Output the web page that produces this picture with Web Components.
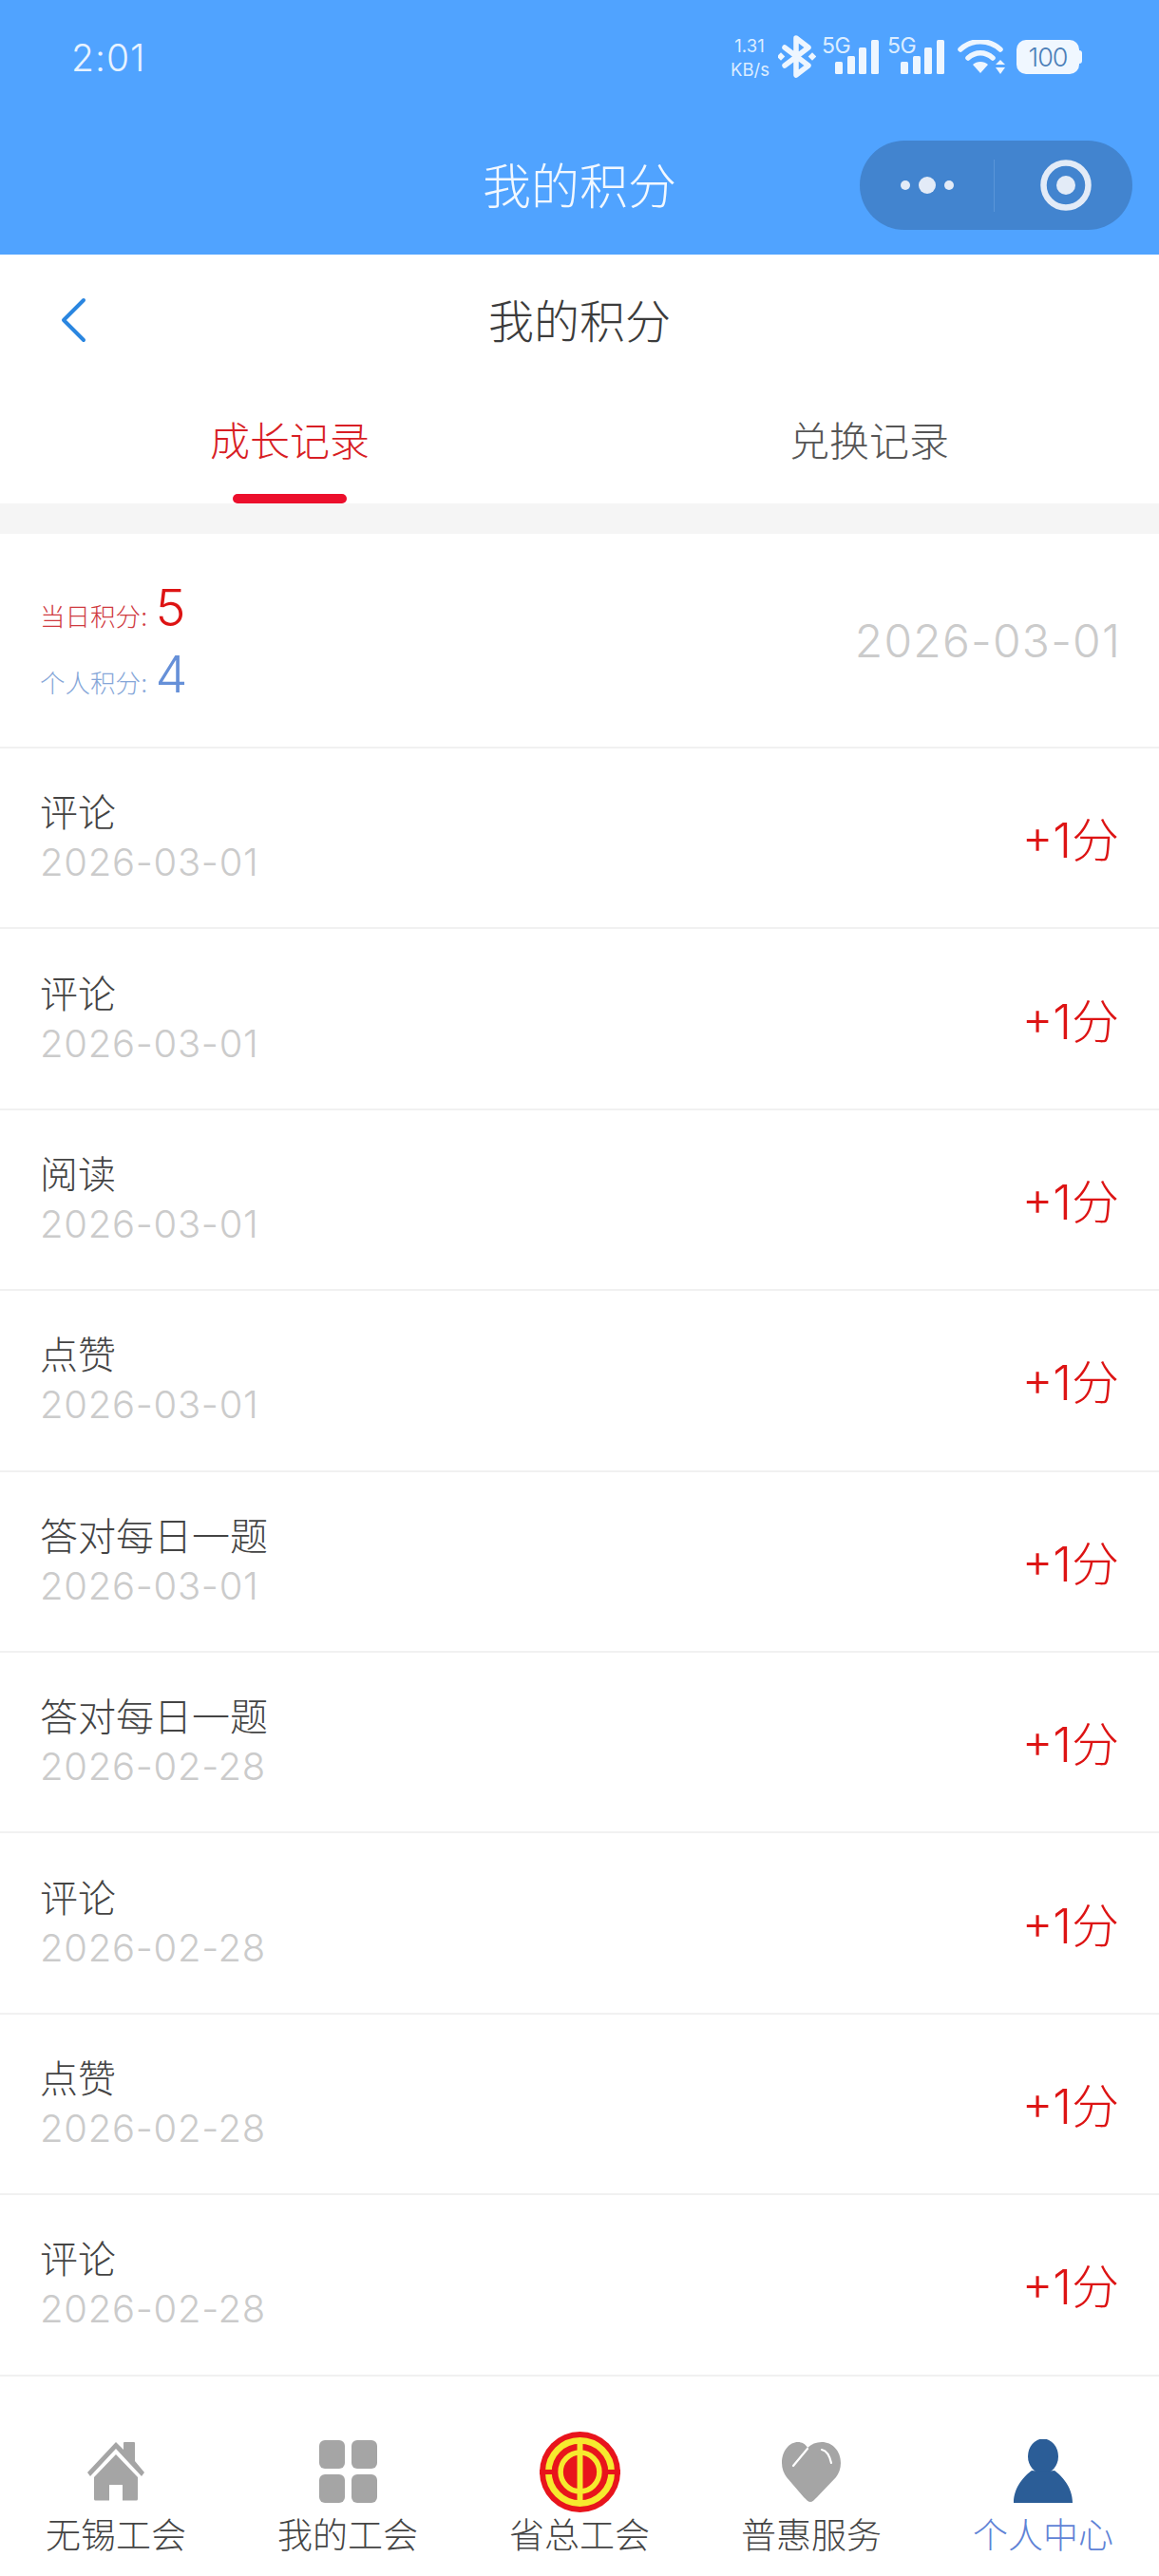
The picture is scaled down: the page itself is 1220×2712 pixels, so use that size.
<!DOCTYPE html>
<html lang="zh-CN">
<head>
<meta charset="utf-8">
<title>我的积分</title>
<style>
html, body{ margin: 0; padding: 0; background: #fff; }
body{
    width: 1220px;
    height: 2712px;
    overflow: hidden;
    font-family: Inter, "Noto Sans CJK SC", sans-serif;
    font-weight: 300;
    color: #444;
}
</style>
</head>
<body>
<status-header>
    <span slot="time">2:01</span>
    <span slot="title">我的积分</span>
</status-header>
<page-title>我的积分</page-title>
<record-tabs>
    <span slot="first">成长记录</span>
    <span slot="second">兑换记录</span>
</record-tabs>
<score-summary today="5" total="4" date="2026-03-01"></score-summary>
<score-row name="评论" date="2026-03-01"></score-row>
<score-row name="评论" date="2026-03-01"></score-row>
<score-row name="阅读" date="2026-03-01"></score-row>
<score-row name="点赞" date="2026-03-01"></score-row>
<score-row name="答对每日一题" date="2026-03-01"></score-row>
<score-row name="答对每日一题" date="2026-02-28"></score-row>
<score-row name="评论" date="2026-02-28"></score-row>
<score-row name="点赞" date="2026-02-28"></score-row>
<score-row name="评论" date="2026-02-28"></score-row>
<bottom-tabs>
    <tab-item label="无锡工会">
        <svg viewBox="0 0 62 68" width="62" height="68">
            <path fill="#a5a5a5" d="M1 35 31 3 39 11V4a1 1 0 0 1 1-1h10a1 1 0 0 1 1 1V23L61 35 58 39 31 10 4 39Z"/>
            <path fill="#a5a5a5" d="M31 16 54 40V63a1.500 1.500 0 0 1-1.500 1.500H38V48H24V64.500H9.500A1.500 1.500 0 0 1 8 63V40Z"/>
        </svg>
    </tab-item>
    <tab-item label="我的工会">
        <svg viewBox="0 0 62 68" width="62" height="68">
            <rect x="1" y="1" width="27" height="30" rx="6" fill="#a5a5a5"/>
            <rect x="35" y="1" width="27" height="30" rx="6" fill="#a5a5a5"/>
            <rect x="1" y="37" width="27" height="30" rx="6" fill="#a5a5a5"/>
            <rect x="35" y="37" width="27" height="30" rx="6" fill="#a5a5a5"/>
        </svg>
    </tab-item>
    <tab-item label="省总工会">
        <svg viewBox="0 0 100 100" width="85" height="85">
            <circle cx="50" cy="50" r="50" fill="#e8141c"/>
            <circle cx="50" cy="50" r="39" fill="none" stroke="#f6ea2e" stroke-width="8"/>
            <rect x="0" y="47" width="20" height="6" fill="#e8141c"/>
            <rect x="80" y="47" width="20" height="6" fill="#e8141c"/>
            <circle cx="50" cy="50" r="24" fill="none" stroke="#f6ea2e" stroke-width="6.500"/>
            <rect x="46.500" y="10" width="7" height="80" fill="#f6ea2e"/>
        </svg>
    </tab-item>
    <tab-item label="普惠服务">
        <svg viewBox="0 0 62 68" width="62" height="68">
            <path fill="#a5a5a5" d="M30 66C28 66 26 64 23 61L5 40C2 36 0 31 0 25 0 12 8 3 17 3 21 3 25 5 27 9 31 5 36 3 42 3 53 3 62 12 62 25 62 31 60 36 57 40L37 61C34 64 32 66 30 66Z"/>
            <path fill="none" stroke="#fff" stroke-width="2.200" stroke-linecap="round" d="M12 28 27 10"/>
            <path fill="none" stroke="#fff" stroke-width="2.200" stroke-linecap="round" d="M42 11C47 12 50 16 52 25"/>
        </svg>
    </tab-item>
    <tab-item label="个人中心" active>
        <svg viewBox="0 0 62 68" width="62" height="68">
            <ellipse cx="31" cy="18" rx="16" ry="18.500" fill="#2b5d97"/>
            <path fill="#2b5d97" d="M0 67C0 50 12 38 19 33 25 34 37 34 43 33 50 38 62 50 62 67Z"/>
        </svg>
    </tab-item>
</bottom-tabs>

<script>
// blue top area: phone status bar plus the host app title and capsule
const statusTemplate = document.createElement("template");
statusTemplate.innerHTML = `
<style>
:host{
    display: block;
    height: 268px;
    background: #50a3ff;
    color: #fff;
    font-family: Inter, "Noto Sans CJK SC", sans-serif;
}
.status{
    display: flex;
    align-items: flex-start;
    justify-content: space-between;
    height: 148px;
    padding: 0 81px 0 75px;
    box-sizing: border-box;
}
.time{
    margin-top: 38px;
    font-size: 39px;
    line-height: 46px;
    font-weight: 300;
    letter-spacing: 1px;
    color: #e8f3ff;
}
.icons{
    display: flex;
    align-items: flex-start;
    margin-top: 36px;
    color: #eef6ff;
}
.speed{
    width: 40px;
    font-size: 18.500px;
    line-height: 25px;
    text-align: center;
    font-weight: 400;
    color: #dcedff;
}
.speed span{ display: block; white-space: nowrap; }
.net{
    position: relative;
    width: 60px;
    height: 44px;
    margin-right: 9px;
}
.net span{
    position: absolute;
    left: 0;
    top: 0;
    font-size: 23px;
    line-height: 24px;
    font-weight: 400;
    letter-spacing: -.5px;
    color: #dcedff;
}
.net svg{ position: absolute; right: 0; top: 6px; }
.bt{ margin: 1px 6px 0 10px; }
.wifi{ margin: 6px 12px 0 5px; }
.battery{
    display: flex;
    align-items: center;
    justify-content: center;
    box-sizing: border-box;
    width: 66px;
    height: 36px;
    margin-top: 6px;
    border-radius: 10px;
    background: #f0f7ff;
    color: #4c7fb8;
    font-size: 27px;
    font-weight: 300;
    letter-spacing: -1px;
}
.cap{
    width: 3px;
    height: 14px;
    margin: 17px 0 0 0;
    border-radius: 0 3px 3px 0;
    background: #f0f7ff;
}
.bar{
    position: relative;
    height: 120px;
    display: flex;
    align-items: center;
    justify-content: center;
}
.title{
    font-size: 51px;
    font-weight: 300;
    color: #f2f8ff;
    margin-top: -30px;
}
.capsule{
    position: absolute;
    left: 905px;
    top: 0;
    width: 287px;
    height: 94px;
    border-radius: 47px;
    background: #4284cf;
    display: flex;
    align-items: center;
}
.capsule .more, .capsule .target{
    flex: 1;
    height: 100%;
    display: flex;
    align-items: center;
    justify-content: center;
}
.capsule .more{ gap: 9px; }
.capsule .target{ padding-left: 4px; }
.more i{
    display: block;
    width: 10px;
    height: 10px;
    border-radius: 50%;
    background: #e3ebf7;
}
.more i.big{ width: 18px; height: 18px; }
.sep{ width: 1px; height: 55px; background: #5a95d8; }
</style>
<div class="status">
    <div class="time"><slot name="time"></slot></div>
    <div class="icons">
        <div class="speed"><span>1.31</span><span>KB/s</span></div>
        <svg class="bt" width="40" height="45" viewBox="0 0 40 45">
            <path fill="none" stroke="#eef6ff" stroke-width="5.500" stroke-linejoin="round" stroke-linecap="round" d="M7 13 32 32 19 42V3L32 13 7 32"/>
            <rect x="0" y="19.500" width="6" height="6" transform="rotate(45 3 22.500)" fill="#eef6ff"/>
            <rect x="33" y="19.500" width="6" height="6" transform="rotate(45 36 22.500)" fill="#eef6ff"/>
        </svg>
        <div class="net">
            <span>5G</span>
            <svg width="46" height="36" viewBox="0 0 46 36" fill="#eef6ff">
                <rect x="0" y="23" width="8" height="13" rx="1.500"/>
                <rect x="13" y="17" width="8" height="19" rx="1.500"/>
                <rect x="25" y="8" width="8" height="28" rx="1.500"/>
                <rect x="38" y="0" width="8" height="36" rx="1.500"/>
            </svg>
        </div>
        <div class="net">
            <span>5G</span>
            <svg width="46" height="36" viewBox="0 0 46 36" fill="#eef6ff">
                <rect x="0" y="23" width="8" height="13" rx="1.500"/>
                <rect x="13" y="17" width="8" height="19" rx="1.500"/>
                <rect x="25" y="8" width="8" height="28" rx="1.500"/>
                <rect x="38" y="0" width="8" height="36" rx="1.500"/>
            </svg>
        </div>
        <svg class="wifi" width="50" height="36" viewBox="0 0 50 36" fill="none">
            <path stroke="#eef6ff" stroke-width="5.500" stroke-linecap="round" d="M3 10C15-1 33-1 45 10"/>
            <path stroke="#eef6ff" stroke-width="5.500" stroke-linecap="round" d="M11 19C19 12 29 12 37 19"/>
            <path fill="#eef6ff" d="M16 26C20 22 28 22 32 26L24 35Z"/>
            <path fill="#eef6ff" d="M45 21 50 26H40Z"/>
            <path fill="#eef6ff" d="M45 36 50 29H40Z"/>
        </svg>
        <div class="battery">100</div>
        <div class="cap"></div>
    </div>
</div>
<div class="bar">
    <div class="title"><slot name="title"></slot></div>
    <div class="capsule">
        <div class="more"><i></i><i class="big"></i><i></i></div>
        <div class="sep"></div>
        <div class="target">
            <svg width="54" height="54" viewBox="0 0 54 54">
                <circle cx="27" cy="27" r="23.500" fill="none" stroke="#e3ebf7" stroke-width="6.500"/>
                <circle cx="27" cy="27" r="10" fill="#e3ebf7"/>
            </svg>
        </div>
    </div>
</div>
`;

class StatusHeader extends HTMLElement {
    constructor(){
        super();
        this.attachShadow({mode: "open"});
        this.shadowRoot.appendChild(statusTemplate.content.cloneNode(true));
    }
}
customElements.define("status-header", StatusHeader);

const pageTitleTemplate = document.createElement("template");
pageTitleTemplate.innerHTML = `
<style>
:host{
    display: flex;
    position: relative;
    align-items: center;
    justify-content: center;
    box-sizing: border-box;
    height: 140px;
    padding-bottom: 6px;
    background: #fff;
    font-size: 48px;
    color: #3c3c3c;
}
svg{ position: absolute; left: 62px; top: 45px; }
</style>
<svg width="30" height="48" viewBox="0 0 30 48" fill="none">
    <path d="M26 3 5 24 26 45" stroke="#2a86e0" stroke-width="4" stroke-linecap="round" stroke-linejoin="round"/>
</svg>
<slot></slot>
`;

class PageTitle extends HTMLElement {
    constructor(){
        super();
        this.attachShadow({mode: "open"});
        this.shadowRoot.appendChild(pageTitleTemplate.content.cloneNode(true));
    }
}
customElements.define("page-title", PageTitle);

const tabsTemplate = document.createElement("template");
tabsTemplate.innerHTML = `
<style>
:host{
    display: block;
    background: #fff;
}
.tabs{
    display: grid;
    grid-template-columns: 610px 610px;
    height: 122px;
}
.tab{
    position: relative;
    display: flex;
    justify-content: center;
    padding-top: 26px;
    box-sizing: border-box;
    font-size: 42px;
    line-height: 62px;
    color: #555;
}
.tab.on{ color: #d81e24; }
.tab.on::after{
    content: "";
    position: absolute;
    left: 245px;
    bottom: 0;
    width: 120px;
    height: 10px;
    border-radius: 5px;
    background: #ec0f2c;
}
.band{ height: 32px; background: #f5f5f5; }
</style>
<div class="tabs">
    <div class="tab on"><slot name="first"></slot></div>
    <div class="tab"><slot name="second"></slot></div>
</div>
<div class="band"></div>
`;

class RecordTabs extends HTMLElement {
    constructor(){
        super();
        this.attachShadow({mode: "open"});
        this.shadowRoot.appendChild(tabsTemplate.content.cloneNode(true));
    }
}
customElements.define("record-tabs", RecordTabs);

const summaryTemplate = document.createElement("template");
summaryTemplate.innerHTML = `
<style>
:host{
    display: flex;
    align-items: center;
    justify-content: space-between;
    box-sizing: border-box;
    height: 226px;
    padding: 2px 40px 0 42px;
    border-bottom: 2px solid #f1f1f1;
    background: #fff;
}
.line{
    display: flex;
    align-items: baseline;
    height: 70px;
    font-size: 26.500px;
    white-space: nowrap;
}
.line b{
    font-weight: 300;
    font-size: 54px;
    line-height: 70px;
    margin-left: 8px;
}
.red{ color: #cf3a40; }
.red b{ color: #dd1414; }
.blue{ color: #85a6d8; }
.blue b{ color: #6690d8; }
.date{
    margin-top: -2px;
    font-size: 48px;
    color: #cbcbcb;
    letter-spacing: 1.200px;
}
</style>
<div>
    <div class="line red">当日积分: <b class="today"></b></div>
    <div class="line blue">个人积分: <b class="total"></b></div>
</div>
<div class="date"></div>
`;

class ScoreSummary extends HTMLElement {
    constructor(){
        super();
        this.attachShadow({mode: "open"});
        this.shadowRoot.appendChild(summaryTemplate.content.cloneNode(true));
    }

    connectedCallback(){
        this.shadowRoot.querySelector(".today").textContent = this.getAttribute("today");
        this.shadowRoot.querySelector(".total").textContent = this.getAttribute("total");
        this.shadowRoot.querySelector(".date").textContent = this.getAttribute("date");
    }
}
customElements.define("score-summary", ScoreSummary);

const rowTemplate = document.createElement("template");
rowTemplate.innerHTML = `
<style>
:host{
    display: flex;
    align-items: center;
    justify-content: space-between;
    box-sizing: border-box;
    height: 190.400px;
    padding: 0 42px 2px;
    border-bottom: 2px solid #f1f1f1;
    background: #fff;
}
.name{
    font-size: 40px;
    line-height: 52px;
    color: #444;
}
.date{
    margin-top: 2px;
    font-size: 40px;
    line-height: 48px;
    color: #cbcbcb;
    letter-spacing: .7px;
}
.points{
    font-size: 50px;
    color: #dd1414;
}
</style>
<div>
    <div class="name"></div>
    <div class="date"></div>
</div>
<div class="points">+1分</div>
`;

class ScoreRow extends HTMLElement {
    constructor(){
        super();
        this.attachShadow({mode: "open"});
        this.shadowRoot.appendChild(rowTemplate.content.cloneNode(true));
    }

    connectedCallback(){
        this.shadowRoot.querySelector(".name").textContent = this.getAttribute("name");
        this.shadowRoot.querySelector(".date").textContent = this.getAttribute("date");
    }
}
customElements.define("score-row", ScoreRow);

const bottomTemplate = document.createElement("template");
bottomTemplate.innerHTML = `
<style>
:host{
    display: grid;
    grid-template-columns: repeat(5, 244px);
    box-sizing: border-box;
    height: 212px;
    padding-top: 58px;
    background: #fff;
}
</style>
<slot></slot>
`;

class BottomTabs extends HTMLElement {
    constructor(){
        super();
        this.attachShadow({mode: "open"});
        this.shadowRoot.appendChild(bottomTemplate.content.cloneNode(true));
    }
}
customElements.define("bottom-tabs", BottomTabs);

const itemTemplate = document.createElement("template");
itemTemplate.innerHTML = `
<style>
:host{
    display: flex;
    flex-direction: column;
    align-items: center;
}
.icon{
    display: flex;
    align-items: center;
    justify-content: center;
    height: 85px;
}
.label{
    margin-top: 1px;
    font-size: 37px;
    line-height: 48px;
    color: #444;
    white-space: nowrap;
}
:host([active]) .label{ color: #5f83d6; }
</style>
<div class="icon"><slot></slot></div>
<div class="label"></div>
`;

class TabItem extends HTMLElement {
    constructor(){
        super();
        this.attachShadow({mode: "open"});
        this.shadowRoot.appendChild(itemTemplate.content.cloneNode(true));
    }

    connectedCallback(){
        this.shadowRoot.querySelector(".label").textContent = this.getAttribute("label");
    }
}
customElements.define("tab-item", TabItem);
</script>
</body>
</html>
